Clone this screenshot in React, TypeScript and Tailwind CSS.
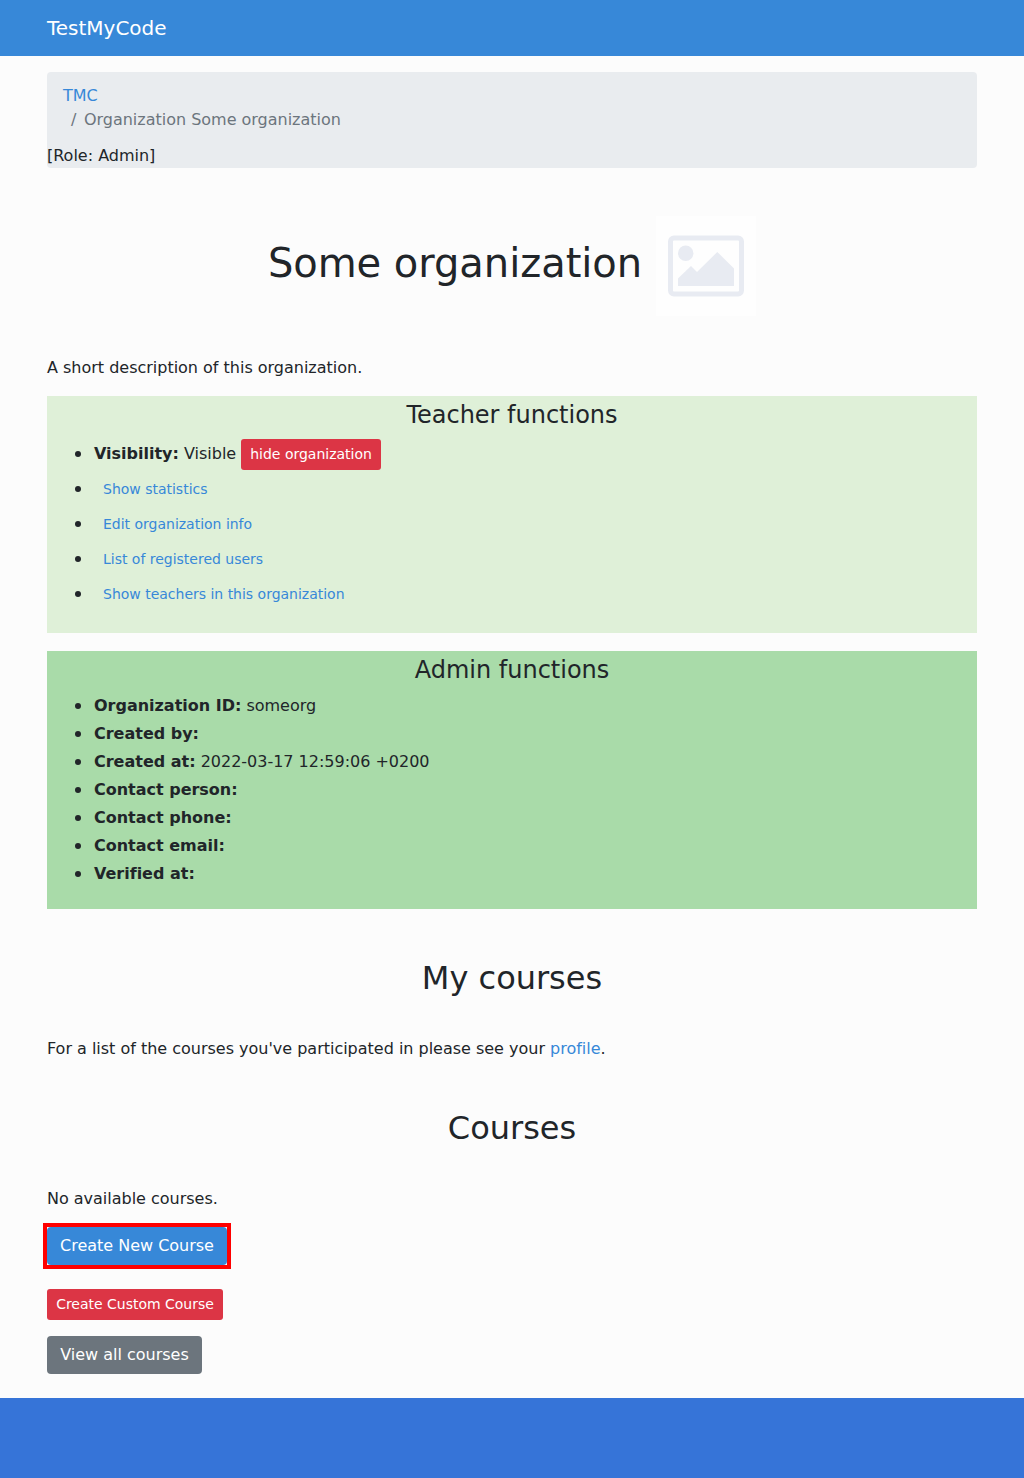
import React from 'react';

const links = ['Show statistics', 'Edit organization info', 'List of registered users', 'Show teachers in this organization'];
const fields = [
  ['Organization ID:', 'someorg'],
  ['Created by:', ''],
  ['Created at:', '2022-03-17 12:59:06 +0200'],
  ['Contact person:', ''],
  ['Contact phone:', ''],
  ['Contact email:', ''],
  ['Verified at:', ''],
];

function Bullet() {
  return <span className="-ml-[19.5px] mr-[13.5px] inline-block h-[6px] w-[6px] rounded-full bg-[#212529] align-[2.5px]" />;
}

function Placeholder() {
  return (
    <svg className="ml-[14px] h-[100px] w-[100px] bg-[#fefefe]" viewBox="0 0 100 100">
      <rect x="14.5" y="22" width="71" height="56" rx="3.5" fill="none" stroke="#e8ebf2" strokeWidth="5" />
      <circle cx="29.7" cy="37.3" r="7.7" fill="#e8ebf2" />
      <path d="M22 70V62.500L35 50L41 56L61.300 36L78 52.500V70Z" fill="#e8ebf2" />
    </svg>
  );
}

export default function App() {
  return (
    <div className="min-h-[1478px] bg-[#fcfcfc] font-['DejaVu_Sans',sans-serif] text-base tracking-[-0.01px] text-[#212529]">
      <nav className="flex h-14 items-center bg-[#3788d8] px-[47px] text-xl text-white">TestMyCode</nav>
      <main className="mx-[47px] flex h-[1342px] flex-col pt-4">
        <div className="h-24 rounded bg-[#e9ecef]">
          <ol className="px-4 pt-3 pb-3">
            <li className="text-[#3788d8]">TMC</li>
            <li className="pl-2 text-[#6c757d]"><span className="pr-[7.5px]">/</span>Organization Some organization</li>
          </ol>
          <p>[Role: Admin]</p>
        </div>
        <div className="mt-12 flex h-[100px] justify-center">
          <h1 className="mt-[23px] text-[40px] leading-[48px] tracking-[-0.04px]">Some organization</h1>
          <Placeholder />
        </div>
        <p className="mt-10">A short description of this organization.</p>
        <section className="mt-4 h-[237px] bg-[#dff0d8] pt-[5px]">
          <h2 className="text-center text-2xl leading-[29px]">Teacher functions</h2>
          <ul className="mt-[9px] pl-[47px]">
            <li className="flex h-8 items-start">
              <span className="pt-[3px] whitespace-pre"><Bullet /><b>Visibility:</b> Visible </span>
              <button className="h-[31px] rounded-[3px] bg-[#dc3545] px-[9px] pb-px text-sm text-white">hide organization</button>
            </li>
            {links.map(t => <li key={t} className="h-[35px] leading-[35px]"><Bullet /><a className="pl-[9px] text-sm leading-[35px] text-[#3788d8]">{t}</a></li>)}
          </ul>
        </section>
        <section className="mt-[18px] h-[258px] bg-[#a9dba9] pt-[5px]">
          <h2 className="text-center text-2xl leading-[29px]">Admin functions</h2>
          <ul className="mt-[7px] pl-[47px]">
            {fields.map(([k, v]) => <li key={k} className="h-7 leading-7"><Bullet /><b>{k}</b> {v}</li>)}
          </ul>
        </section>
        <h2 className="mt-[50px] text-center text-[32px] leading-[38px]">My courses</h2>
        <p className="mt-10">For a list of the courses you've participated in please see your <a className="text-[#3788d8]">profile</a>.</p>
        <h2 className="mt-12 text-center text-[32px] leading-[38px]">Courses</h2>
        <p className="mt-10">No available courses.</p>
        <div className="mt-3 flex flex-col items-start">
          <div className="-ml-1 border-4 border-[#ff0000]">
            <button className="block h-[38px] w-[180px] rounded bg-[#3788d8] text-white">Create New Course</button>
          </div>
          <button className="mt-5 h-[31px] w-44 rounded-[3px] bg-[#dc3545] pb-px text-sm text-white">Create Custom Course</button>
          <button className="mt-4 h-[38px] w-[155px] rounded bg-[#6c757d] text-white">View all courses</button>
        </div>
      </main>
      <footer className="h-20 bg-[#3674d8]" />
    </div>
  );
}
